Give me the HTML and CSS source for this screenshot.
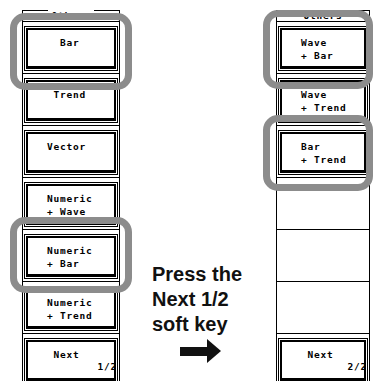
FILE: index.html
```html
<!DOCTYPE html>
<html lang="en">
<head>
    <meta charset="UTF-8">
    <meta name="viewport" content="width=device-width, initial-scale=1.0">
    <title>Others Display Menu</title>
    <link rel="stylesheet" href="styles.css">
</head>
<body>
    <div class="screen">
        <!-- Soft key menu, page 1 -->
        <div class="panel panel-left">
            <div class="caption"><span>Others</span></div>
            <div class="rows">
                <div class="row"><div class="key"><div class="face">  Bar</div></div></div>
                <div class="row"><div class="key"><div class="face"> Trend</div></div></div>
                <div class="row"><div class="key"><div class="face">Vector</div></div></div>
                <div class="row"><div class="key"><div class="face"><span class="ln">Numeric</span><span class="ln">+ Wave</span></div></div></div>
                <div class="row"><div class="key"><div class="face"><span class="ln">Numeric</span><span class="ln">+ Bar</span></div></div></div>
                <div class="row"><div class="key"><div class="face"><span class="ln">Numeric</span><span class="ln">+ Trend</span></div></div></div>
                <div class="row"><div class="key"><div class="face"><span class="ln"> Next</span><span class="page">1/2</span></div></div></div>
            </div>
        </div>

        <div class="note">
            <p>Press the<br>Next 1/2<br>soft key</p>
            <svg class="arrow" width="41" height="24" viewBox="0 0 41 24">
                <rect x="0" y="8" width="29" height="9" fill="#111"/>
                <polygon points="27,0 41,12 27,24" fill="#111"/>
            </svg>
        </div>

        <!-- Soft key menu, page 2 -->
        <div class="panel panel-right">
            <div class="caption"><span>Others</span></div>
            <div class="rows">
                <div class="row"><div class="key"><div class="face"><span class="ln">Wave</span><span class="ln">+ Bar</span></div></div></div>
                <div class="row"><div class="key"><div class="face"><span class="ln">Wave</span><span class="ln">+ Trend</span></div></div></div>
                <div class="row"><div class="key"><div class="face"><span class="ln">Bar</span><span class="ln">+ Trend</span></div></div></div>
                <div class="row"></div>
                <div class="row"></div>
                <div class="row"></div>
                <div class="row"><div class="key"><div class="face"><span class="ln"> Next</span><span class="page">2/2</span></div></div></div>
            </div>
        </div>

        <!-- highlight rings -->
        <div class="ring ring-bar"></div>
        <div class="ring ring-numbar"></div>
        <div class="ring ring-wavebar"></div>
        <div class="ring ring-bartrend"></div>
    </div>
</body>
</html>
```

FILE: styles.css
```css
body {
    margin: 0;
    background: #fff;
    overflow: hidden;
    height: 381px;
    color: #000;
}

.screen {
    position: relative;
    display: flex;
    align-items: flex-start;
    height: 381px;
}

.panel {
    box-sizing: border-box;
    margin-top: 10px;
    height: 380px;
    border: 1px solid #000;
    border-bottom: none;
    flex-shrink: 0;
}

.panel-left {
    margin-left: 22px;
    width: 98px;
}

.panel-right {
    width: 94px;
}

.caption {
    display: flex;
    justify-content: center;
    height: 11px;
    margin-top: -1px;
}

.caption span {
    background: #fff;
    padding: 1px 3px 0;
    font: bold 9.5px/10px "DejaVu Sans Mono", monospace;
    letter-spacing: 0.8px;
}

.rows {
    border-top: 1px solid #000;
}

.row {
    box-sizing: border-box;
    height: 52px;
    border-bottom: 1px solid #000;
    padding: 4px 1px 2px;
}

.key {
    box-sizing: border-box;
    height: 45px;
    border: 1px solid #000;
    padding: 1px;
    background: #fff;
}

.face {
    box-sizing: border-box;
    height: 100%;
    border: 2px solid #000;
    border-bottom-width: 3px;
    padding: 7px 0 0 19px;
    font: bold 9.5px/12.5px "DejaVu Sans Mono", monospace;
    letter-spacing: 0.8px;
    white-space: pre;
}

.ln {
    display: block;
}

.page {
    display: block;
    text-align: right;
    line-height: 10px;
    margin-right: -3px;
}

.note {
    margin-left: 32px;
    width: 124px;
    padding-top: 262px;
    flex-shrink: 0;
}

.note p {
    margin: 0;
    font: bold 20px/25px "Liberation Sans", Arial, sans-serif;
    color: #111;
}

.arrow {
    display: block;
    margin: 2px 0 0 28px;
}

/* grey rounded frames marking the keys */
.ring {
    position: absolute;
    box-sizing: border-box;
    border: 7px solid #8c8c8c;
    border-radius: 15px;
}

.ring-bar {
    left: 10px;
    top: 13px;
    width: 122px;
    height: 77px;
}

.ring-numbar {
    left: 10px;
    top: 217px;
    width: 122px;
    height: 76px;
}

.ring-wavebar {
    left: 263px;
    top: 10px;
    width: 110px;
    height: 79px;
}

.ring-bartrend {
    left: 263px;
    top: 115px;
    width: 110px;
    height: 76px;
}
```
